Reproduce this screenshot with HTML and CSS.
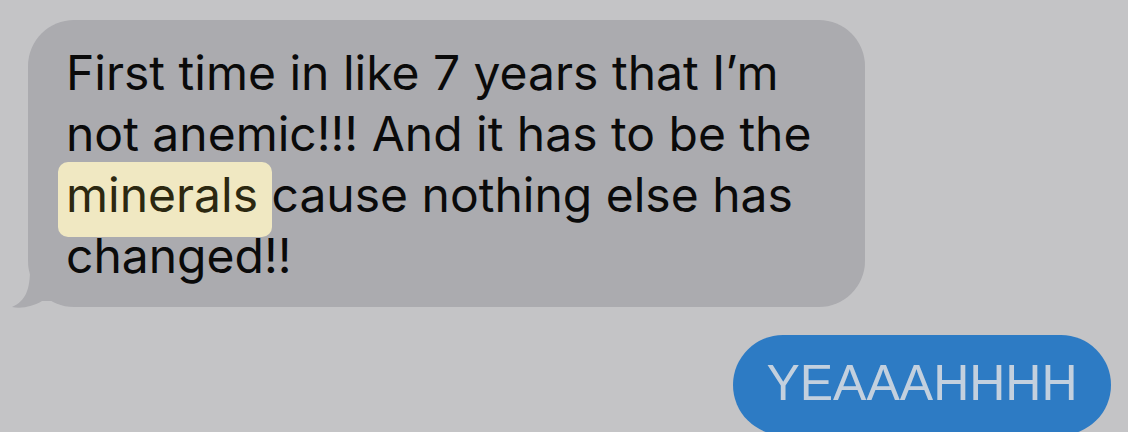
FILE: index.html
```html
<!DOCTYPE html>
<html>
<head>
<meta charset="utf-8">
<link rel="stylesheet" href="styles.css">
</head>
<body>
<div class="thread">
  <div class="msg msg-in">
    <p class="bubble-text">First time in like 7 years that I’m<br>not anemic!!! And it has to be the<br><span class="hl">minerals </span>cause nothing else has<br>changed!!</p>
    <svg class="tail" width="40" height="40" viewBox="0 0 40 40"><path d="M18 0 C18 20 14 32 0 38 C10 40 22 37 30 32 L40 32 L40 0 Z" fill="#ababaf"/></svg>
  </div>
  <div class="msg msg-out">YEAAAHHHH</div>
</div>
</body>
</html>
```

FILE: styles.css
```css
html, body {
  margin: 0;
  padding: 0;
  background: #c4c4c6;
  width: 1128px;
  height: 432px;
  overflow: hidden;
}
.thread {
  display: flex;
  flex-direction: column;
  padding-top: 20px;
}
.msg {
  position: relative;
}
.msg-in {
  margin-left: 28px;
  width: 837px;
  height: 287px;
  box-sizing: border-box;
  background: #ababaf;
  border-radius: 46px;
  padding: 22px 0 0 38px;
}
.bubble-text {
  margin: 0;
  font-family: Inter, "Noto Sans", sans-serif;
  font-size: 48px;
  line-height: 61px;
  color: #0a0a0a;
  letter-spacing: 0;
}
.hl {
  background: #f0e8c2;
  color: #2c2810;
  border-radius: 10px;
  padding: 3px 0 13px 8px;
  margin-left: -8px;
}
.tail {
  position: absolute;
  left: -16px;
  bottom: -2px;
}
.msg-out {
  align-self: flex-end;
  margin-right: 17px;
  margin-top: 28px;
  width: 378px;
  height: 100px;
  box-sizing: border-box;
  background: #2d7bc4;
  border-radius: 50px;
  color: #c3d0de;
  font-family: "Liberation Sans", Arial, sans-serif;
  font-size: 50px;
  display: flex;
  align-items: center;
  justify-content: center;
  padding-bottom: 4px;
}
```
